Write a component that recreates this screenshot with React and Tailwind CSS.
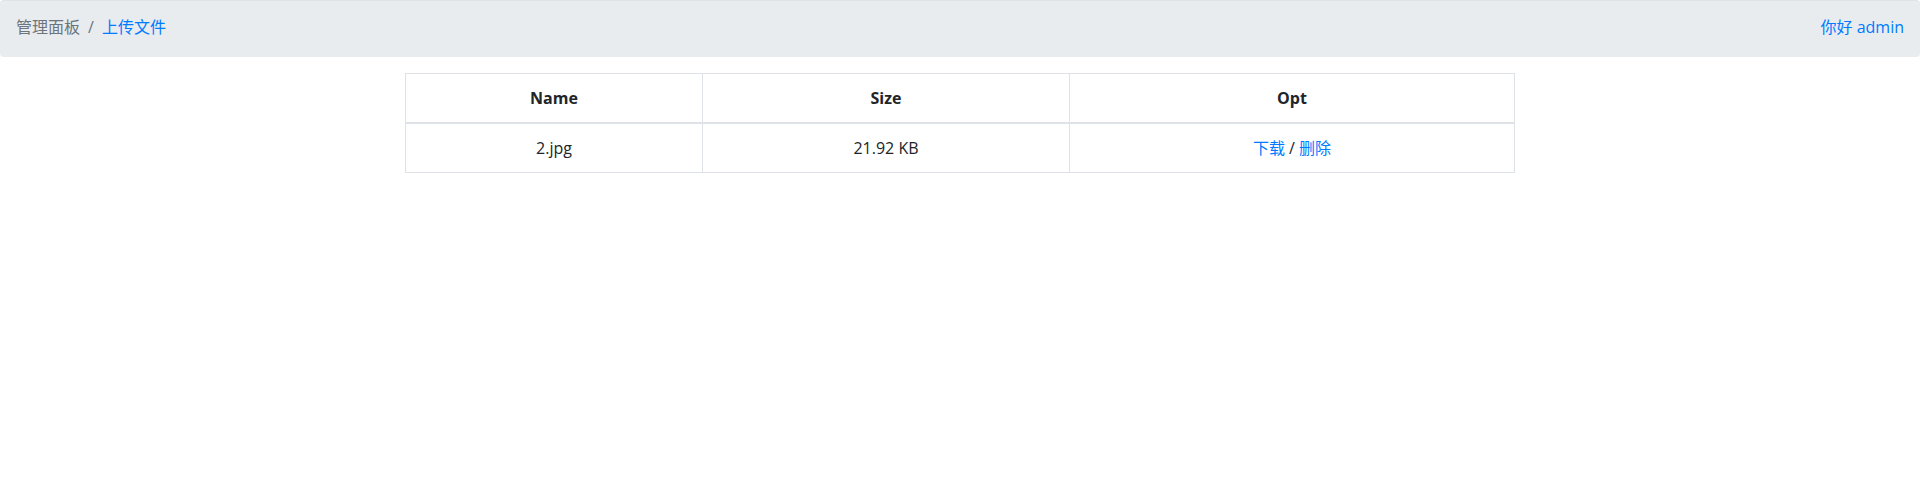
const files = [{ name: "2.jpg", size: "21.92 KB" }];

const App = () => {
  return (
    <div
      className="min-h-screen bg-white text-[#212529] text-base"
      style={{ fontFamily: '"Open Sans", "Noto Sans CJK SC", sans-serif' }}
    >
      <nav className="flex items-start justify-between h-[57px] pt-[14px] px-4 bg-[#e9ecef] rounded border-t border-[#e0e3e6] mb-4">
        <ol className="flex items-center leading-6">
          <li className="text-[#6c757d]">管理面板</li>
          <li className="px-2 text-[#6c757d]">/</li>
          <li>
            <a href="#" className="text-[#007bff]">
              上传文件
            </a>
          </li>
        </ol>
        <a href="#" className="leading-6 text-[#007bff]">
          你好 admin
        </a>
      </nav>

      <div className="w-[1110px] mx-auto">
        <table className="w-full border-collapse border border-[#dee2e6] text-center leading-6">
          <thead>
            <tr>
              <th className="w-[297px] py-3 px-3 border border-[#dee2e6] border-b-2 font-bold">
                Name
              </th>
              <th className="w-[367px] py-3 px-3 border border-[#dee2e6] border-b-2 font-bold">
                Size
              </th>
              <th className="py-3 px-3 border border-[#dee2e6] border-b-2 font-bold">
                Opt
              </th>
            </tr>
          </thead>
          <tbody>
            {files.map((f) => (
              <tr key={f.name}>
                <td className="py-3 px-3 border border-[#dee2e6]">{f.name}</td>
                <td className="py-3 px-3 border border-[#dee2e6]">{f.size}</td>
                <td className="py-3 px-3 border border-[#dee2e6]">
                  <a href="#" className="text-[#007bff]">
                    下载
                  </a>{" "}
                  /{" "}
                  <a href="#" className="text-[#007bff]">
                    删除
                  </a>
                </td>
              </tr>
            ))}
          </tbody>
        </table>
      </div>
    </div>
  );
};

export default App;
